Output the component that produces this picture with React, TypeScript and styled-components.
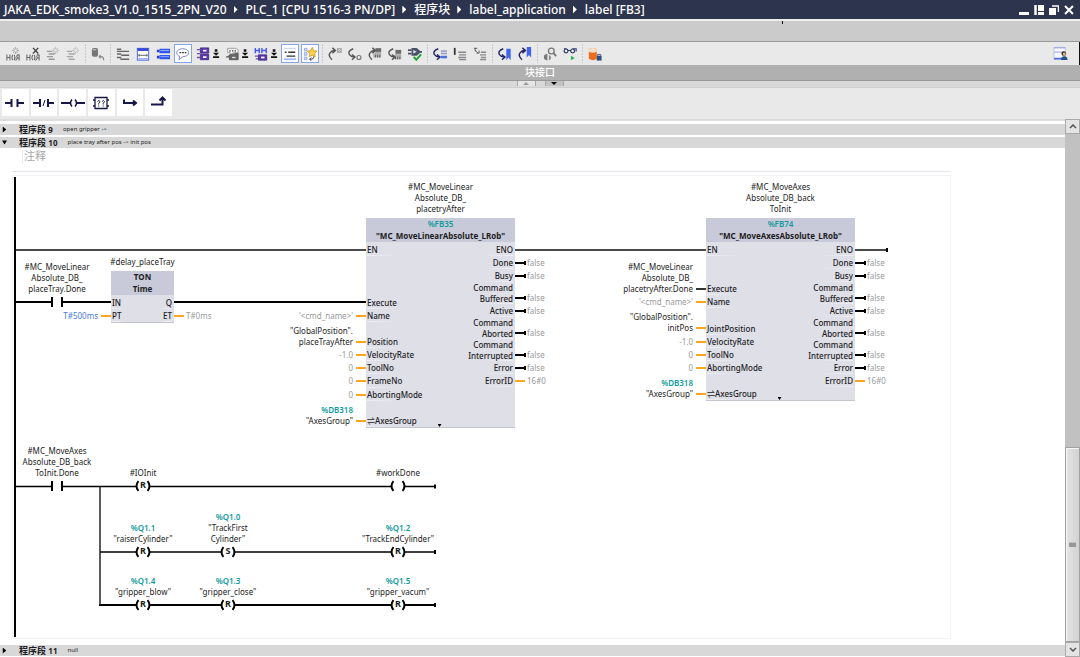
import React, { Fragment, ReactNode } from "react";
import styled, { createGlobalStyle, css } from "styled-components";

const color = {
  navy: "#2d344d",
  ink: "#1c1c22",
  muted: "#9a9a9a",
  teal: "#0e9a9c",
  blue: "#4a7bdc",
  orange: "#ffa51f",
  panel: "#e9e9e9",
  strip: "#d8d8d8",
  block: "#dfdfe8",
  blockHead: "#c9cad9",
};

const GlobalStyle = createGlobalStyle`
  * { box-sizing: border-box; }
  body {
    margin: 0;
    background: #fff;
    color: ${color.ink};
    font-family: "Noto Sans", "Noto Sans CJK SC", sans-serif;
    font-size: 8px;
    line-height: 11px;
  }
  button { border: 0; padding: 0; margin: 0; background: none; color: inherit; font: inherit; }
  h1, h2, p { margin: 0; font: inherit; }
`;

/* ---------- window frame ---------- */

const Page = styled.div`
  display: flex;
  flex-direction: column;
  min-height: 100vh;
`;

const TitleBar = styled.header`
  display: flex;
  align-items: center;
  justify-content: space-between;
  height: 19px;
  padding: 0 4px;
  background: ${color.navy};
  color: #fff;
`;

const Crumbs = styled.nav`
  display: flex;
  align-items: center;
  font-size: 12px;
  font-weight: 500;
  line-height: 18px;
  white-space: nowrap;
`;

const Crumb = styled.a`
  color: inherit;
  text-decoration: none;
`;

const CrumbArrow = styled.span`
  width: 4px;
  height: 8px;
  margin: 0 8px 0 7px;
  background: #fff;
  clip-path: polygon(0 0, 100% 50%, 0 100%);
`;

const WindowControls = styled.div`
  display: flex;
`;

const WindowButton = styled.button`
  display: grid;
  place-items: center;
  width: 15px;
  height: 16px;
`;

const TopBand = styled.div`
  display: flex;
  justify-content: flex-end;
  height: 23px;
  padding-right: 297px;
  border-top: 2px solid #efefef;
  border-bottom: 1px solid #999;
  background: #cbcbcb;
`;

const BandMark = styled.i`
  width: 1px;
  height: 3px;
  background: #111;
`;

/* ---------- toolbar ---------- */

const Toolbar = styled.div`
  display: flex;
  align-items: center;
  height: 23px;
  padding-left: 3px;
  border-right: 1px solid #111;
  background: ${color.panel};
`;

const Tool = styled.button<{ $on?: boolean }>`
  display: grid;
  place-items: center;
  flex: none;
  width: 18px;
  height: 19px;
  margin: 0 1px;
  ${(p) =>
    p.$on &&
    css`
      background: #fff;
      box-shadow: inset 0 0 0 1px #86a5e6;
    `}
`;

const DropTool = styled.button`
  display: grid;
  place-items: center start;
  flex: none;
  width: 9px;
  height: 19px;
`;

const ToolSeparator = styled.i`
  flex: none;
  width: 5px;
  height: 19px;
  background: repeating-linear-gradient(#c9c9c9 0 2px, transparent 2px 3px) 2px 0 / 1px 100% no-repeat;
`;

const ToolbarEnd = styled.div`
  flex: 1;
  display: flex;
  justify-content: flex-end;
  padding-right: 9px;
`;

const InterfaceBar = styled.h2`
  height: 16px;
  border-bottom: 1px solid #999;
  background: #b0b0b0;
  color: #fff;
  font-size: 10px;
  font-weight: 500;
  line-height: 15px;
  text-align: center;
`;

const Splitter = styled.div`
  display: flex;
  justify-content: center;
  gap: 9px;
  height: 7px;
  border-bottom: 1px solid #cfcfcf;
  background: #d9d9d9;
`;

const SplitHandle = styled.button<{ $down?: boolean }>`
  display: grid;
  place-items: center;
  width: 19px;
  height: 5px;
  border: solid #a8a8a8;
  border-width: 0 1px;
  background: ${(p) => (p.$down ? "#c3c3c3" : "#e6e6e6")};
`;

const Favourites = styled.div`
  height: 33px;
  padding: 1px 0 0 2px;
  border-bottom: 2px solid #dcdcdc;
  background: ${color.panel};
`;

const FavouriteList = styled.div`
  display: grid;
  grid-template-columns: repeat(6, 1fr);
  gap: 2px;
  width: 170px;
`;

const Favourite = styled.button`
  display: grid;
  place-items: center;
  height: 27px;
  background: #fff;
`;

/* ---------- workspace ---------- */

const Workspace = styled.div`
  display: flex;
  flex: 1;
`;

const Editor = styled.main`
  flex: 1;
  min-width: 0;
  padding-top: 3px;
  overflow: hidden;
`;

const NetworkHeader = styled.header<{ $gap?: boolean }>`
  display: flex;
  align-items: center;
  height: 11px;
  margin-bottom: ${(p) => (p.$gap ? 2 : 0)}px;
  padding-left: 2px;
  background: ${color.strip};
`;

const Caret = styled.button<{ $open?: boolean }>`
  width: 5px;
  height: 6px;
  margin-right: 12px;
  background: #000;
  clip-path: ${(p) => (p.$open ? "polygon(0 15%, 100% 15%, 50% 85%)" : "polygon(15% 0, 85% 50%, 15% 100%)")};
`;

const NetworkTitle = styled.h2`
  font-size: 9px;
  font-weight: 700;
  white-space: pre;
`;

const NetworkNumber = styled.span`
  font-size: 8px;
`;

const NetworkNote = styled.p`
  margin-left: 10px;
  font-size: 6px;
`;

const Comment = styled.p`
  height: 14px;
  margin: 2px 0 7px 22px;
  border-left: 1px solid #ececec;
  padding-left: 1px;
  color: #a6a6a6;
  font-size: 11px;
  line-height: 12px;
`;

const CANVAS_HEIGHT = 474;

const Canvas = styled.section`
  position: relative;
  height: ${CANVAS_HEIGHT}px;
`;

const Wiring = styled.svg`
  display: block;
`;

const ScrollBar = styled.aside`
  display: flex;
  flex-direction: column;
  flex: none;
  width: 15px;
  margin-top: -2px;
  background: #c1c1c1;
`;

const ScrollButton = styled.button`
  display: grid;
  place-items: center;
  height: 15px;
  border: 1px solid #a9a9a9;
  background: #e4e4e4;
`;

const ScrollTrack = styled.div`
  flex: 314;
`;

const ScrollThumb = styled.div`
  display: grid;
  place-items: center;
  flex: 194;
  border: 1px solid #a2a2a2;
  box-shadow: inset 1px 1px #f5f5f5;
  background: linear-gradient(90deg, #e4e4e4, #d2d2d2);
`;

const ThumbGrip = styled.i`
  width: 7px;
  height: 5px;
  border-top: 1px solid #c0c0c0;
  background: #989898;
`;

/* ---------- ladder elements ---------- */

const ElementBox = styled.div<{ $x: number; $y: number }>`
  position: absolute;
  left: ${(p) => p.$x - 50}px;
  bottom: ${(p) => CANVAS_HEIGHT - p.$y - 6}px;
  display: flex;
  flex-direction: column;
  align-items: center;
  width: 100px;
  text-align: center;
  white-space: pre-line;
`;

const Address = styled.span`
  color: ${color.teal};
  font-weight: 600;
`;

const Symbol = styled.span`
  display: flex;
  justify-content: space-between;
  align-items: center;
  width: 16px;
  height: 12px;
  margin-top: 2px;
  font-size: 9px;
  font-weight: 700;
  line-height: 10px;
`;

const Paren = () => (
  <svg width="4" height="12" viewBox="0 0 4 12">
    <path d="M3.5 1Q-.5 6 3.5 11" fill="none" stroke="#000" strokeWidth="2" />
  </svg>
);

const ParenRight = () => (
  <svg width="4" height="12" viewBox="0 0 4 12">
    <path d="M.5 1Q4.500 6 .5 11" fill="none" stroke="#000" strokeWidth="2" />
  </svg>
);

const CoilKind = styled.span`
  height: 12px;
`;

type CoilProps = { x: number; y: number; address?: string; name: string; kind?: string };

const Coil = ({ x, y, address, name, kind }: CoilProps) => (
  <ElementBox $x={x} $y={y}>
    {address && <Address>{address}</Address>}
    <span>{name}</span>
    <Symbol>
      <Paren />
      <CoilKind>{kind}</CoilKind>
      <ParenRight />
    </Symbol>
  </ElementBox>
);

const Contact = ({ x, y, name }: { x: number; y: number; name: string }) => (
  <ElementBox $x={x} $y={y}>
    <span>{name}</span>
    <Symbol as="svg" viewBox="0 0 16 12">
      <path d="M3 1v10M13 1v10" stroke="#000" strokeWidth="2" />
    </Symbol>
  </ElementBox>
);

const BlockNode = styled.article<{ $x: number; $y: number; $width: number }>`
  position: absolute;
  left: ${(p) => p.$x - 90}px;
  top: ${(p) => p.$y}px;
  display: grid;
  grid-template-columns: 90px ${(p) => p.$width}px 60px;
  row-gap: 4px;
`;

const Instance = styled.h2`
  grid-column: 2;
  justify-self: center;
  text-align: center;
  white-space: pre;
`;

const Block = styled.div`
  position: relative;
  grid-column: 2;
  border-bottom: 1px solid #c3c3d2;
  background: ${color.block};
`;

const BlockHead = styled.header`
  height: 24px;
  background: ${color.blockHead};
  font-weight: 700;
  line-height: 12px;
  text-align: center;
  white-space: pre;
`;

const BlockBody = styled.div<{ $height: number }>`
  display: flex;
  justify-content: space-between;
  height: ${(p) => p.$height}px;
  padding: 1px 2px 0 1px;
  font-weight: 500;
`;

const Inputs = styled.div<{ $rows: number }>`
  display: grid;
  grid-template-rows: repeat(${(p) => p.$rows}, 1fr);
`;

const InputPin = styled.span<{ $row: number }>`
  grid-row: ${(p) => p.$row};
  display: flex;
  align-items: center;
  background: linear-gradient(90deg, #efeff5, transparent) 0 100% / 32px 1px no-repeat;
`;

const Outputs = styled.div`
  text-align: right;
`;

const OutputPin = styled.span<{ $tall: boolean }>`
  display: block;
  height: ${(p) => (p.$tall ? 22 : 13)}px;
  line-height: ${(p) => (p.$tall ? 11 : 13)}px;
  background: linear-gradient(270deg, #efeff5, transparent) 100% 100% / 32px 1px no-repeat;
  white-space: pre;
`;

const Operands = styled(Inputs)<{ $height: number }>`
  grid-column: 1;
  grid-row: 2;
  height: ${(p) => p.$height + 24}px;
  padding-top: 25px;
`;

const Operand = styled.span<{ $row: number }>`
  grid-row: ${(p) => p.$row};
  display: flex;
  align-items: flex-end;
  justify-content: flex-end;
  gap: 3px;
  height: 12px;
  text-align: right;
  white-space: pre;
`;

const Tone = styled.span<{ $tone?: string }>`
  color: ${(p) => p.$tone || "inherit"};
`;

const Lead = styled.i<{ $black?: boolean }>`
  flex: none;
  width: 10px;
  height: 2px;
  margin-bottom: 4px;
  background: ${(p) => (p.$black ? "#333" : color.orange)};
`;

const Results = styled.div`
  grid-column: 3;
  grid-row: 2;
  padding-top: 25px;
  color: ${color.muted};
`;

const Result = styled.span<{ $tall: boolean }>`
  display: flex;
  align-items: flex-end;
  gap: 2px;
  height: ${(p) => (p.$tall ? 22 : 13)}px;
  padding-bottom: 1px;
`;

const BoolLead = styled.i`
  flex: none;
  width: 11px;
  height: 4px;
  margin: 0 -1px 3px 0;
  border-right: 2px solid #000;
  background: linear-gradient(#000, #000) 0 1px / 100% 2px no-repeat;
`;

const MoreMark = styled.i`
  position: absolute;
  left: 48%;
  bottom: 0;
  width: 4px;
  height: 3px;
  background: #000;
  clip-path: polygon(0 0, 100% 0, 50% 100%);
`;

type Input = { row: number; pin: string; address?: string; value?: string; tone?: string; black?: boolean };
type Output = { pin: string; value?: string };
type FunctionBlockProps = {
  x: number;
  y: number;
  width: number;
  rows: number;
  height: number;
  instance: string;
  address?: string;
  name: string;
  inputs: Input[];
  outputs: Output[];
  more?: boolean;
};

const isTall = (pin: string) => pin.includes("\n");

const FunctionBlock = (p: FunctionBlockProps) => (
  <BlockNode $x={p.x} $y={p.y} $width={p.width}>
    <Instance>{p.instance}</Instance>
    <Operands $rows={p.rows} $height={p.height}>
      {p.inputs
        .filter((i) => i.value)
        .map((i) => (
          <Operand key={i.pin} $row={i.row}>
            <Tone $tone={i.tone}>
              {i.address && <Address>{i.address + "\n"}</Address>}
              {i.value}
            </Tone>
            <Lead $black={i.black} />
          </Operand>
        ))}
    </Operands>
    <Block>
      <BlockHead>
        {p.address && <Address>{p.address + "\n"}</Address>}
        {p.name}
      </BlockHead>
      <BlockBody $height={p.height}>
        <Inputs $rows={p.rows}>
          {p.inputs.map((i) => (
            <InputPin key={i.pin} $row={i.row}>
              {i.pin}
            </InputPin>
          ))}
        </Inputs>
        <Outputs>
          {p.outputs.map((o) => (
            <OutputPin key={o.pin} $tall={isTall(o.pin)}>
              {o.pin}
            </OutputPin>
          ))}
        </Outputs>
      </BlockBody>
      {p.more && <MoreMark />}
    </Block>
    <Results>
      {p.outputs.map((o) => (
        <Result key={o.pin} $tall={isTall(o.pin)}>
          {o.value && (
            <>
              {o.value === "false" ? <BoolLead /> : <Lead />}
              {o.value}
            </>
          )}
        </Result>
      ))}
    </Results>
  </BlockNode>
);

const motionOutputs: Output[] = [
  { pin: "ENO" },
  { pin: "Done", value: "false" },
  { pin: "Busy", value: "false" },
  { pin: "Command\nBuffered", value: "false" },
  { pin: "Active", value: "false" },
  { pin: "Command\nAborted", value: "false" },
  { pin: "Command\nInterrupted", value: "false" },
  { pin: "Error", value: "false" },
  { pin: "ErrorID", value: "16#0" },
];

const linearInputs: Input[] = [
  { row: 1, pin: "EN" },
  { row: 5, pin: "Execute" },
  { row: 6, pin: "Name", value: "'<cmd_name>'", tone: color.muted },
  { row: 8, pin: "Position", value: '"GlobalPosition".\nplaceTrayAfter' },
  { row: 9, pin: "VelocityRate", value: "-1.0", tone: color.muted },
  { row: 10, pin: "ToolNo", value: "0", tone: color.muted },
  { row: 11, pin: "FrameNo", value: "0", tone: color.muted },
  { row: 12, pin: "AbortingMode", value: "0", tone: color.muted },
  { row: 14, pin: "⇌AxesGroup", address: "%DB318", value: '"AxesGroup"' },
];

const axesInputs: Input[] = [
  { row: 1, pin: "EN" },
  { row: 4, pin: "Execute", value: "#MC_MoveLinear\nAbsolute_DB_\nplacetryAfter.Done", black: true },
  { row: 5, pin: "Name", value: "'<cmd_name>'", tone: color.muted },
  { row: 7, pin: "JointPosition", value: '"GlobalPosition".\ninitPos' },
  { row: 8, pin: "VelocityRate", value: "-1.0", tone: color.muted },
  { row: 9, pin: "ToolNo", value: "0", tone: color.muted },
  { row: 10, pin: "AbortingMode", value: "0", tone: color.muted },
  { row: 12, pin: "⇌AxesGroup", address: "%DB318", value: '"AxesGroup"' },
];

const timerInputs: Input[] = [
  { row: 1, pin: "IN" },
  { row: 2, pin: "PT", value: "T#500ms", tone: color.blue },
];

const coils: CoilProps[] = [
  { x: 143, y: 315, name: "#IOInit", kind: "R" },
  { x: 398, y: 315, name: "#workDone" },
  { x: 143, y: 381, address: "%Q1.1", name: '"raiserCylinder"', kind: "R" },
  { x: 228, y: 381, address: "%Q1.0", name: '"TrackFirst\nCylinder"', kind: "S" },
  { x: 398, y: 381, address: "%Q1.2", name: '"TrackEndCylinder"', kind: "R" },
  { x: 143, y: 434, address: "%Q1.4", name: '"gripper_blow"', kind: "R" },
  { x: 228, y: 434, address: "%Q1.3", name: '"gripper_close"', kind: "R" },
  { x: 398, y: 434, address: "%Q1.5", name: '"gripper_vacum"', kind: "R" },
];

/* ---------- icons ---------- */

const Rungs = () => (
  <path
    d="M1 8.500v7M1 12h3M4.500 8.500v7M8 9Q5.500 12 8 15M9.500 9Q11 12 9.500 15M15 8.500v7M15 12.500h-2.500M15 9h-2q-1.500 1.500 0 3.500l-2 3"
    stroke="#666"
    strokeWidth="1.200"
    fill="none"
  />
);

const Burst = ({ c = "#aaa" }: { c?: string }) => (
  <path d="M11 0v2.500M11 5.500v2.500M7 4h2.500M12.500 4h2.500M8.500 1.500l1.500 1.500M12 5l1.500 1.500M13.500 1.500l-1.500 1.500M10 5l-1.500 1.500" stroke={c} strokeWidth="1.200" />
);

const Stack = ({ c = "#999" }: { c?: string }) => (
  <path d="M1 5h6M3 8h7M1 11h7M3 14h7" stroke={c} strokeWidth="1.700" />
);

const Hook = ({ c = "#555", up }: { c?: string; up?: boolean }) =>
  up ? (
    <path d="M4.500 14.500Q-.5 10 2.500 6.500Q4.500 4 7.500 4M5 1l3.500 3-3.500 3" fill="none" stroke={c} strokeWidth="1.600" />
  ) : (
    <path d="M6 2Q-.5 4.500 1.500 8.500Q3.500 11.500 7 11.500M4.500 8.500l3.500 3-3.500 3" fill="none" stroke={c} strokeWidth="1.600" />
  );

const Card = ({ y = 1 }: { y?: number }) => (
  <g>
    <path d={`M8 ${y}h7v11H6v-5h2z`} fill="#b0b0b0" />
    <path d={`M8.500 ${y + 8}v3M11 ${y + 8}v3M13.500 ${y + 8}v3`} stroke="#555" />
    <path d={`M9 ${y + 2.500}h6`} stroke="#6a6a6a" strokeWidth="4" />
  </g>
);

const Boxes = ({ y = 1 }: { y?: number }) => (
  <g>
    <path d={`M5 ${y}h9.500v6H5zM5 ${y + 7.500}h9.500v6H5z`} fill="#5b35b0" stroke="#452a80" />
    <path d={`M8 ${y + 3}h4M8 ${y + 10.500}h4`} stroke="#fff" strokeWidth="2" />
    <path d={`M1 ${y + 2}h4M1 ${y + 6.500}h4M1 ${y + 11}h4`} stroke="#6a58a0" strokeWidth="1.500" />
  </g>
);

const icons: Record<string, ReactNode> = {
  "Insert network": (<><Burst /><Rungs /></>),
  "Delete network": (<><path d="M8 1l6 6.500M14 1l-6 6.500" stroke="#444" strokeWidth="1.600" /><Rungs /></>),
  "Insert row": (<><Stack /><Burst c="#bbb" /></>),
  "Add row": (<><Stack c="#a6a6a6" /><Burst c="#c2c2c2" /></>),
  "Keep values": (<><rect x="1" y="1" width="7" height="10" rx="2" fill="#777" /><path d="M2 3h4" stroke="#bbb" strokeWidth="1.500" /><path d="M9 11h2.500q3 0 3 4M9 11l2-2M9 11l2 2" stroke="#888" fill="none" strokeWidth="1.300" /></>),
  "Open networks": (<path d="M1 2.500h5M1 5h14M1 8h5M6 9.500h9M1 12h5M5 14h10" stroke="#666" strokeWidth="1.700" />),
  "Close networks": (<><rect x="1.500" y="1.500" width="13" height="13.500" fill="#fff" stroke="#3b58dc" /><path d="M2 3h12" stroke="#3344d4" strokeWidth="3" /><path d="M3 9.500h10M3.500 8v3M12.500 8v3" stroke="#555" /><path d="M2 13.500h12" stroke="#9fb2fa" strokeWidth="2" /></>),
  "Free-form view": (<><path d="M1 4.500h3M1 11.500h3" stroke="#2b39c4" strokeWidth="3" /><path d="M4 4.500h12M4 11.500h12" stroke="#2f55ee" strokeWidth="5" /><path d="M5 4h10M5 11h10" stroke="#9db8ff" /></>),
  "Comments": (<><path d="M8 2C-1 2-.5 9.500 4 10.500L3.500 14.500 8 11c9 0 8.500-9 0-9z" fill="#fff" stroke="#6b7cc8" /><path d="M4 6.500h2M7 6.500h2M10 6.500h2" stroke="#333" strokeWidth="1.500" /></>),
  "Operand display": <Boxes />,
  "Tag information": (<><path d="M3 1.500h10l2 2v3H9l-3 3V6.500H3z" fill="#f4f4f4" stroke="#999" /><path d="M5 4.500h1.500M8 4.500h1.500M11 4.500h1.500" stroke="#333" strokeWidth="1.500" /><path d="M5 9l10-2v7.500H5v-3H1" fill="#666" stroke="#555" /><path d="M8 12h4" stroke="#ddd" strokeWidth="1.500" /></>),
  "Favourite calls": (<><path d="M1.500 1v6M6 1v6M1.500 4H6M9 1v6M14 1v6M9 4h5M6 4h1" stroke="#4a58e6" strokeWidth="1.600" /><path d="M5 9h9.500v6H5z" fill="#5b35b0" stroke="#452a80" /><path d="M8 12h4" stroke="#fff" strokeWidth="2" /><path d="M1 10.500h4M2 13.500h3" stroke="#6a58a0" strokeWidth="1.500" /></>),
  "Network titles": (<><path d="M1 1.500h14" stroke="#b7c8f5" /><path d="M2 6h2M6 6h8M4 10.500h10" stroke="#333" strokeWidth="1.500" /><path d="M1 14h14" stroke="#9db5f3" strokeWidth="2" /></>),
  "Favourites": (<><path d="M1.500 1.500h3v3h-3zM1.500 6.500h3v3h-3zM1.500 11.500h3v3h-3z" fill="#dce6ff" stroke="#8ba3e6" /><path d="M10.500 .5l1.700 3.700 3.800.5-2.700 2.700.6 3.900-3.400-2-3.400 2 .6-3.900L5 4.700l3.800-.5z" fill="#ffd04a" stroke="#c89a35" /><path d="M12 11q1 3-4 3M9.500 12l-2 2 2 1.500" fill="none" stroke="#222" /></>),
  "Previous error": (<><Hook up /><circle cx="13" cy="4" r="2.300" fill="none" stroke="#888" /><path d="M10 1l6 6M16 1l-6 6" stroke="#888" strokeWidth=".7" /></>),
  "Next error": (<><Hook /><circle cx="12.500" cy="12" r="2.300" fill="none" stroke="#777" strokeWidth="1.300" /></>),
  "Previous update": (<><Card /><Hook up /></>),
  "Next update": (<><Card y={3} /><Hook /></>),
  "Check consistency": (<><path d="M4 1h6l4 3.500v2L10 10H4z" fill="#4b5166" /><path d="M0 3.500h4M0 7.500h4M13 5.500h3" stroke="#4b5166" strokeWidth="2" /><path d="M6 3.500l4 2-4 2z" fill="#dfe6ee" /><path d="M6.500 11.500l3 3L15 8.500" fill="none" stroke="#1fa336" strokeWidth="2.300" /></>),
  "Go to line": (<><path d="M9 4.500h7M9 7.500h7" stroke="#8e9cba" strokeWidth="1.800" /><path d="M9 11.500h7" stroke="#4a70ee" strokeWidth="3" /><Hook c="#23235e" /></>),
  "Absolute operands": (<><path d="M2 1v8" stroke="#333" strokeWidth="2" /><path d="M6 6h9M7 9h8M6 12h9M7 14.500h8" stroke="#888" strokeWidth="1.500" /></>),
  "Symbolic operands": (<><path d="M1 1.500h4M2 3.500l4 3.500M4 7h3V4M2.500 1v4" stroke="#555" fill="none" /><path d="M9 6h6M8 9h7M9 12h6M8 14.500h7" stroke="#888" strokeWidth="1.500" /></>),
  "Next bookmark": (<><Hook c="#23236a" /><path d="M9.500 2h5v13l-2.500-3-2.500 3z" fill="#3f63ee" /></>),
  "Previous bookmark": (<><Hook c="#23236a" up /><path d="M10 0h5v12l-2.500-3-2.500 3z" fill="#3f63ee" /></>),
  "Find usage": (<><circle cx="9.500" cy="4.500" r="3.300" fill="none" stroke="#777" strokeWidth="1.500" /><path d="M12 7l3 3.500" stroke="#777" strokeWidth="2" /><path d="M5 8Q1 8 1 11.500T5 15.500zM7 9q4 3 0 6.500z" fill="#777" /></>),
  "Monitoring": (<><circle cx="3.500" cy="4.500" r="2.200" fill="none" stroke="#2c3a68" strokeWidth="1.300" /><circle cx="11" cy="4.500" r="2.200" fill="none" stroke="#2c3a68" strokeWidth="1.300" /><path d="M5.500 4h3.500M1 2h3M11 2h4V5" stroke="#2c3a68" strokeWidth="1.300" fill="none" /><path d="M9 10l4.500 2.500-4.500 2.500z" fill="#25b84b" /></>),
  "Lock data block": (<><path d="M1 2.500q4.500-3 9 0v11q-4.500 3-9 0z" fill="#f26a1b" /><path d="M1 2.500q4.500-3 9 0v3q-4.500 2-9 0z" fill="#f4e2c8" /><path d="M10 10h5.500v5.500H10z" fill="#2b4f80" /><path d="M11 10V8.500h3.500V10" fill="none" stroke="#2b4f80" /></>),
};

const dropdownAfter = new Set(["Operand display", "Tag information", "Favourite calls"]);
const active = new Set(["Comments", "Network titles", "Favourites"]);
const separatorAfter = new Set([
  "Add row",
  "Keep values",
  "Favourites",
  "Check consistency",
  "Symbolic operands",
  "Previous bookmark",
  "Monitoring",
]);

const favouriteIcons: [string, ReactNode][] = [
  ["Normally open contact", <path d="M0 8h6M6.500 4v8M12.500 4v8M13 8h6" />],
  ["Normally closed contact", <><path d="M-1 8h6M6 4v8M14 4v8M14 8h6" /><path d="M9 11l2-6" strokeWidth="1" /></>],
  ["Assignment", <><path d="M-2 8h9M14 8h8" /><path d="M9 4.500Q6 8 9 11.500M12 4.500Q15 8 12 11.500" strokeWidth="1.500" /></>],
  ["Empty box", <><path d="M4 2.500h12v11H4zM2 5h2M16 5h2M2 11h2M16 11h2" strokeWidth="1.300" /><path d="M6.500 6.500q1.500-2 2.500 0L7.700 8.500v1M11 6.500q1.500-2 2.500 0l-1.300 2v1M7.700 10.500v1M12.200 10.500v1" strokeWidth="1" /></>],
  ["Open branch", <path d="M4 4.500V8h12M13 5.500L16 8l-3 2.500" />],
  ["Close branch", <path d="M2 9.500h11.500V3M10.500 5.500l3-3 3 3" />],
];

const crumbs = ["JAKA_EDK_smoke3_V1.0_1515_2PN_V20", "PLC_1 [CPU 1516-3 PN/DP]", "程序块", "label_application", "label [FB3]"];

const windowIcons: [string, ReactNode][] = [
  ["Minimize", <path d="M0 8.500h10" strokeWidth="3" />],
  ["Float", <><path d="M1.500 0v10" strokeWidth="2.500" /><path d="M4 0h6v6H4zM4 7h6v3H4z" fill="#fff" stroke="none" /></>],
  ["Restore", <><path d="M3 1h6.500v6" strokeWidth="1.500" /><path d="M0 3h7v7H0z" fill="#fff" stroke="none" /></>],
  ["Close", <path d="M1 1l8 8M9 1l-8 8" strokeWidth="2" />],
];

const App = () => (
  <Page>
    <GlobalStyle />
    <TitleBar>
      <Crumbs>
        {crumbs.map((c, i) => (
          <Fragment key={c}>
            {i > 0 && <CrumbArrow />}
            <Crumb href="#">{c}</Crumb>
          </Fragment>
        ))}
      </Crumbs>
      <WindowControls>
        {windowIcons.map(([label, icon]) => (
          <WindowButton key={label} aria-label={label}>
            <svg width="10" height="10" viewBox="0 0 10 10" fill="none" stroke="#fff">
              {icon}
            </svg>
          </WindowButton>
        ))}
      </WindowControls>
    </TitleBar>
    <TopBand>
      <BandMark />
    </TopBand>
    <Toolbar>
      {Object.entries(icons).map(([label, icon]) => (
        <Fragment key={label}>
          <Tool aria-label={label} $on={active.has(label)}>
            <svg width="14" height="14" viewBox="0 0 16 16">
              {icon}
            </svg>
          </Tool>
          {dropdownAfter.has(label) && (
            <DropTool aria-label={label + " options"}>
              <svg width="7" height="11" viewBox="0 0 8 12">
                <path d="M2 1h3v3H2zM0 5h7L3.500 8.500zM0 9h7v2H0z" fill="#111" />
              </svg>
            </DropTool>
          )}
          {separatorAfter.has(label) && <ToolSeparator />}
        </Fragment>
      ))}
      <ToolbarEnd>
        <Tool aria-label="User view">
          <svg width="15" height="15" viewBox="0 0 16 16">
            <path d="M1 1.500h12v12H1z" fill="#f7f9ff" stroke="#b9c3ea" />
            <path d="M1 2h12M1 6.500h12" stroke="#8f9fe0" />
            <path d="M1 13.500h8" stroke="#5a6fdc" strokeWidth="2" />
            <circle cx="11.500" cy="8" r="2.500" fill="#3b2a20" />
            <circle cx="12" cy="8.500" r="1.500" fill="#e5b48a" />
            <path d="M8.500 15q0-4 3.500-4t3.500 4z" fill="#22508c" />
          </svg>
        </Tool>
      </ToolbarEnd>
    </Toolbar>
    <InterfaceBar>块接口</InterfaceBar>
    <Splitter>
      <SplitHandle aria-label="Collapse">
        <svg width="6" height="3" viewBox="0 0 6 3">
          <path d="M3 0l3 3H0z" fill="#999" />
        </svg>
      </SplitHandle>
      <SplitHandle $down aria-label="Expand">
        <svg width="6" height="3" viewBox="0 0 6 3">
          <path d="M0 0h6L3 3z" fill="#000" />
        </svg>
      </SplitHandle>
    </Splitter>
    <Favourites>
      <FavouriteList>
        {favouriteIcons.map(([label, icon]) => (
          <Favourite key={label} aria-label={label}>
            <svg width="20" height="16" viewBox="0 0 20 16" fill="none" stroke="#17174a" strokeWidth="2" overflow="visible">
              {icon}
            </svg>
          </Favourite>
        ))}
      </FavouriteList>
    </Favourites>
    <Workspace>
      <Editor>
        <NetworkHeader $gap>
          <Caret aria-label="Expand network 9" />
          <NetworkTitle>
            程序段 <NetworkNumber>9</NetworkNumber>
          </NetworkTitle>
          <NetworkNote>open gripper -&gt;</NetworkNote>
        </NetworkHeader>
        <NetworkHeader>
          <Caret $open aria-label="Collapse network 10" />
          <NetworkTitle>
            程序段 <NetworkNumber>10</NetworkNumber>
          </NetworkTitle>
          <NetworkNote>place tray after pos -&gt; init pos</NetworkNote>
        </NetworkHeader>
        <Comment>注释</Comment>
        <Canvas>
          <Wiring width="952" height={CANVAS_HEIGHT} viewBox={`0 0 952 ${CANVAS_HEIGHT}`} fill="none" stroke="#000">
            <path d="M12 .5h939" stroke="#e4e4ea" />
            <path d="M12.500 4.500h938v463h-938z" stroke="#f3f3f3" />
            <path d="M15 6v460" strokeWidth="2" />
            <path d="M15 79h351M514 79h192M854 79h33" strokeWidth="1.500" stroke="#111" />
            <path d="M15 131h37M63 131h48M174 131h192" strokeWidth="2" />
            <path d="M15 315.500h37M63 315.500h73M150 315.500h241M405 315.500h30" strokeWidth="1.500" />
            <path d="M100 381h36M150 381h71M235 381h156M405 381h30" strokeWidth="1.500" />
            <path d="M99 434h37M150 434h71M235 434h156M405 434h30" strokeWidth="2" />
            <path d="M100 315v119" stroke="#222" strokeWidth="1.500" />
            <path d="M887 77v4M435 313.500v4M435 379v4M435 432v4" strokeWidth="2" />
          </Wiring>
          <Contact x={57} y={131} name={"#MC_MoveLinear\nAbsolute_DB_\nplaceTray.Done"} />
          <Contact x={57} y={315} name={"#MC_MoveAxes\nAbsolute_DB_back\nToInit.Done"} />
          {coils.map((c) => (
            <Coil key={c.name} {...c} />
          ))}
          <FunctionBlock
            x={111}
            y={85}
            width={63}
            rows={2}
            height={27}
            instance="#delay_placeTray"
            name={"TON\nTime"}
            inputs={timerInputs}
            outputs={[{ pin: "Q" }, { pin: "ET", value: "T#0ms" }]}
          />
          <FunctionBlock
            x={366}
            y={10}
            width={149}
            rows={14}
            height={185}
            instance={"#MC_MoveLinear\nAbsolute_DB_\nplacetryAfter"}
            address="%FB35"
            name={'"MC_MoveLinearAbsolute_LRob"'}
            inputs={linearInputs}
            outputs={motionOutputs}
            more
          />
          <FunctionBlock
            x={706}
            y={10}
            width={149}
            rows={12}
            height={158}
            instance={"#MC_MoveAxes\nAbsolute_DB_back\nToInit"}
            address="%FB74"
            name={'"MC_MoveAxesAbsolute_LRob"'}
            inputs={axesInputs}
            outputs={motionOutputs}
            more
          />
        </Canvas>
        <NetworkHeader>
          <Caret aria-label="Expand network 11" />
          <NetworkTitle>
            程序段 <NetworkNumber>11</NetworkNumber>
          </NetworkTitle>
          <NetworkNote>null</NetworkNote>
        </NetworkHeader>
      </Editor>
      <ScrollBar>
        <ScrollButton aria-label="Scroll up">
          <svg width="8" height="5" viewBox="0 0 8 5">
            <path d="M1 4l3-3 3 3" fill="none" stroke="#555" strokeWidth="1.500" />
          </svg>
        </ScrollButton>
        <ScrollTrack />
        <ScrollThumb>
          <ThumbGrip />
        </ScrollThumb>
        <ScrollButton aria-label="Scroll down">
          <svg width="8" height="5" viewBox="0 0 8 5">
            <path d="M1 1l3 3 3-3" fill="none" stroke="#555" strokeWidth="1.500" />
          </svg>
        </ScrollButton>
      </ScrollBar>
    </Workspace>
  </Page>
);

export default App;
